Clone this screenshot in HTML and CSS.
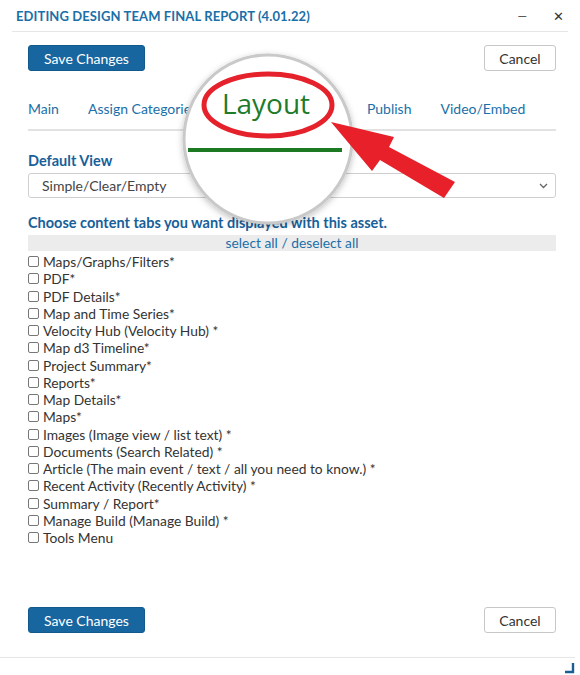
FILE: index.html
```html
<!DOCTYPE html>
<html lang="en">
<head>
  <meta charset="UTF-8" />
  <title>Editing Design Team Final Report</title>
  <link rel="stylesheet" href="styles.css">
</head>
<body>

  <div class="dialog">
    <!-- Title bar -->
    <div class="titlebar">
      <span class="title">EDITING DESIGN TEAM FINAL REPORT (4.01.22)</span>
      <span class="win-btns">
        <span class="win-min">&#8212;</span>
        <span class="win-close">&#10005;</span>
      </span>
    </div>

    <div class="body">
      <div class="actions">
        <button class="btn-save">Save Changes</button>
        <button class="btn-cancel">Cancel</button>
      </div>

      <nav class="tabs">
        <a>Main</a>
        <a>Assign Categories</a>
        <a class="covered">Layout</a>
        <a class="covered">Events</a>
        <a>Publish</a>
        <a>Video/Embed</a>
      </nav>

      <label class="field-label">Default View</label>
      <div class="select">
        <span>Simple/Clear/Empty</span>
        <svg width="9" height="6" viewBox="0 0 9 6"><path d="M1 1l3.5 3.5L8 1" fill="none" stroke="#666" stroke-width="1.3"/></svg>
      </div>

      <label class="field-label choose">Choose content tabs you want displayed with this asset.</label>
      <div class="select-bar"><a>select all</a> / <a>deselect all</a></div>

      <ul class="tab-list">
        <li><span class="box"></span>Maps/Graphs/Filters*</li>
        <li><span class="box"></span>PDF*</li>
        <li><span class="box"></span>PDF Details*</li>
        <li><span class="box"></span>Map and Time Series*</li>
        <li><span class="box"></span>Velocity Hub (Velocity Hub) *</li>
        <li><span class="box"></span>Map d3 Timeline*</li>
        <li><span class="box"></span>Project Summary*</li>
        <li><span class="box"></span>Reports*</li>
        <li><span class="box"></span>Map Details*</li>
        <li><span class="box"></span>Maps*</li>
        <li><span class="box"></span>Images (Image view / list text) *</li>
        <li><span class="box"></span>Documents (Search Related) *</li>
        <li><span class="box"></span>Article (The main event / text / all you need to know.) *</li>
        <li><span class="box"></span>Recent Activity (Recently Activity) *</li>
        <li><span class="box"></span>Summary / Report*</li>
        <li><span class="box"></span>Manage Build (Manage Build) *</li>
        <li><span class="box"></span>Tools Menu</li>
      </ul>

      <div class="actions bottom">
        <button class="btn-save">Save Changes</button>
        <button class="btn-cancel">Cancel</button>
      </div>
    </div>

    <div class="footer">
      <svg class="resize" width="10" height="12" viewBox="0 0 10 12"><path d="M8 0v9H0" fill="none" stroke="#1a5f94" stroke-width="2.4"/></svg>
    </div>
  </div>

  <!-- Magnifier callout over the Layout tab -->
  <svg class="callout" width="580" height="675" viewBox="0 0 580 675">
    <defs>
      <filter id="shadow" x="-20%" y="-20%" width="140%" height="140%">
        <feDropShadow dx="0" dy="2" stdDeviation="3" flood-color="#000" flood-opacity="0.25"/>
      </filter>
    </defs>
    <circle cx="268" cy="139" r="84" fill="#fff" stroke="#c9c9c9" stroke-width="3" filter="url(#shadow)"/>
    <text x="266" y="114" text-anchor="middle" class="zoom-text">Layout</text>
    <ellipse cx="268" cy="105" rx="64" ry="31" fill="none" stroke="#e5222b" stroke-width="5"/>
    <rect x="188" y="148" width="154" height="4" fill="#1b7a22"/>
    <polygon points="331,122 394,137 389,147 455,182 444,198 380,160 372,171" fill="#e8202a"/>
  </svg>

</body>
</html>
```

FILE: styles.css
```css
body {
  margin: 0;
  font-family: Lato, 'Open Sans', sans-serif;
  background: #fff;
  color: #333;
}

.dialog {
  width: 580px;
  height: 675px;
  display: flex;
  flex-direction: column;
}

.titlebar {
  height: 31px;
  margin: 0 12px;
  padding: 0 4px;
  display: flex;
  align-items: center;
  justify-content: space-between;
  border-bottom: 1px solid #e6e6e6;
}

.title {
  font-weight: bold;
  font-size: 13px;
  color: #1a6fa8;
  letter-spacing: 0.1px;
}

.win-btns {
  display: flex;
  gap: 26px;
  color: #333;
  font-size: 13px;
}

.win-min { font-size: 12px; }

.body {
  padding: 0 24px 0 28px;
  flex: 1;
}

.actions {
  display: flex;
  justify-content: space-between;
  margin-top: 13px;
}

.actions.bottom {
  margin-top: 61px;
}

.btn-save {
  width: 117px;
  height: 26px;
  background: #17669f;
  color: #fff;
  border: 1px solid #135a8c;
  border-radius: 3px;
  font-family: inherit;
  font-size: 14px;
  padding: 0;
}

.btn-cancel {
  width: 72px;
  height: 26px;
  background: #fff;
  color: #333;
  border: 1px solid #c8c8c8;
  border-radius: 3px;
  font-family: inherit;
  font-size: 14px;
  padding: 0;
}

.tabs {
  display: flex;
  gap: 29px;
  margin-top: 29px;
  padding-bottom: 12px;
  border-bottom: 2px solid #e2e2e2;
  font-size: 14px;
  color: #1a6fa8;
}

.tabs a { white-space: nowrap; }

/* hidden under the magnifier */
.tabs a.covered { visibility: hidden; }

.field-label {
  display: block;
  font-weight: bold;
  font-size: 14.5px;
  color: #17609a;
  margin-top: 21px;
}

.field-label.choose {
  margin-top: 16px;
}

.select {
  margin-top: 4px;
  height: 23px;
  border: 1px solid #cfcfcf;
  border-radius: 3px;
  display: flex;
  align-items: center;
  justify-content: space-between;
  padding: 0 7px 0 13px;
  font-size: 14px;
  color: #444;
}

.select-bar {
  margin-top: 4px;
  height: 16px;
  background: #ececec;
  text-align: center;
  font-size: 13.8px;
  line-height: 16px;
  color: #1a6fa8;
}

.tab-list {
  list-style: none;
  margin: 2px 0 0;
  padding: 0;
  font-size: 13.8px;
  color: #333;
}

.tab-list li {
  height: 17.25px;
  line-height: 17.25px;
  display: flex;
  align-items: center;
  white-space: nowrap;
}

.box {
  width: 9px;
  height: 9px;
  border: 1px solid #777;
  border-radius: 2px;
  margin-right: 4px;
  flex: none;
}

.footer {
  height: 17px;
  margin-right: 5px;
  border-top: 1px solid #e6e6e6;
  display: flex;
  justify-content: flex-end;
  align-items: flex-end;
}

.callout {
  position: absolute;
  top: 0;
  left: 0;
  pointer-events: none;
}

.zoom-text {
  font-family: 'Open Sans', sans-serif;
  font-size: 28px;
  fill: #1e7b2a;
}
```
